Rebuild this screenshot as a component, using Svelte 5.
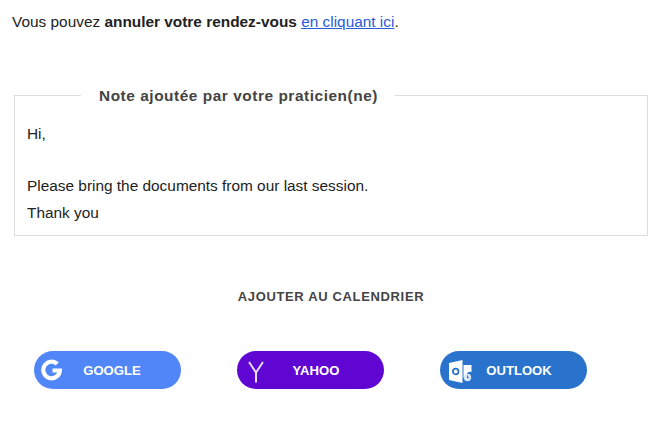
<script>
  const lines = ['Please bring the documents from our last session.', 'Thank you'];
</script>

<div class="page">
  <p class="intro">Vous pouvez <b>annuler votre rendez-vous</b> <a href="#top">en cliquant ici</a>.</p>

  <fieldset class="note">
    <legend>Note ajoutée par votre praticien(ne)</legend>
    <p class="hi">Hi,</p>
    {#each lines as line}
      <p class="line">{line}</p>
    {/each}
  </fieldset>

  <h2>AJOUTER AU CALENDRIER</h2>

  <div class="buttons">
    <a class="btn google" href="#top">
      <svg class="icon" width="22" height="22" viewBox="0 0 22 22" aria-hidden="true">
        <path d="M16.300 4.900A8.300 8.300 0 1 0 18.900 11.500H11.500" fill="none" stroke="#fff" stroke-width="4.200"/>
      </svg>
      <span>GOOGLE</span>
    </a>
    <a class="btn yahoo" href="#top">
      <svg class="icon y" width="16" height="22" viewBox="0 0 16 22" aria-hidden="true">
        <path d="M1 1 8 11.500 15 1 M8 11.500V21.500" fill="none" stroke="#e6dcf8" stroke-width="2"/>
      </svg>
      <span class="shift">YAHOO</span>
    </a>
    <a class="btn outlook" href="#top">
      <svg class="icon o" width="23" height="23" viewBox="0 0 23 23" aria-hidden="true">
        <path d="M0 3 13.500 0v23L0 20z" fill="#fff"/>
        <path d="M14.500 5H22.500v7a5 5 0 0 0-6 5.500h-2z" fill="#fff"/>
        <circle cx="6.700" cy="11.500" r="2.800" fill="none" stroke="#2a73cc" stroke-width="1.800"/>
        <circle cx="18.500" cy="17.500" r="3.700" fill="#dbe8f8"/>
        <path d="M18.500 15.500v2.300h1.500" fill="none" stroke="#2a73cc" stroke-width="1"/>
      </svg>
      <span class="shift">OUTLOOK</span>
    </a>
  </div>
</div>

<style>
  :global(body) {
    margin: 0;
    background: #fff;
  }
  .page {
    width: 663px;
    height: 433px;
    overflow: hidden;
    box-sizing: border-box;
    padding: 13px 15px 0 12px;
    font-family: "Liberation Sans", Arial, sans-serif;
    font-size: 15.4px;
    color: #222;
  }
  .intro {
    margin: 0;
    line-height: 17px;
  }
  .intro a {
    color: #2a5bd7;
  }
  .note {
    margin: 57px 0 0 2px;
    padding: 16px 12px 9px;
    border: 1px solid #dcdcdc;
    min-width: 0;
  }
  legend {
    margin-left: 54px;
    padding: 0 17px 0 18px;
    font-weight: 700;
    letter-spacing: 0.55px;
    color: #444;
    line-height: 17px;
  }
  .note p {
    margin: 0;
    line-height: 27px;
    color: #222;
  }
  .hi {
    padding-bottom: 25px;
  }
  h2 {
    margin: 53px 0 0;
    text-align: center;
    font-size: 13px;
    font-weight: 700;
    letter-spacing: 0.65px;
    color: #444;
    line-height: 16px;
    padding-left: 2px;
  }
  .buttons {
    display: flex;
    gap: 56px;
    margin: 46px 0 0 22px;
  }
  .btn {
    width: 147px;
    height: 38px;
    box-sizing: border-box;
    padding-left: 9px;
    border-radius: 19px;
    display: flex;
    align-items: center;
    justify-content: center;
    position: relative;
    color: #fff;
    text-decoration: none;
    font-size: 13.100px;
    font-weight: 700;
  }
  .shift {
    padding-left: 2px;
  }
  .btn .icon {
    position: absolute;
    left: 7px;
    top: 8px;
  }
  .btn .y {
    left: 11px;
    top: 10px;
  }
  .btn .o {
    left: 9px;
    top: 9px;
  }
  .google { background: #5086f7; }
  .yahoo { background: #5f06d3; }
  .outlook { background: #2a73cc; }
</style>
